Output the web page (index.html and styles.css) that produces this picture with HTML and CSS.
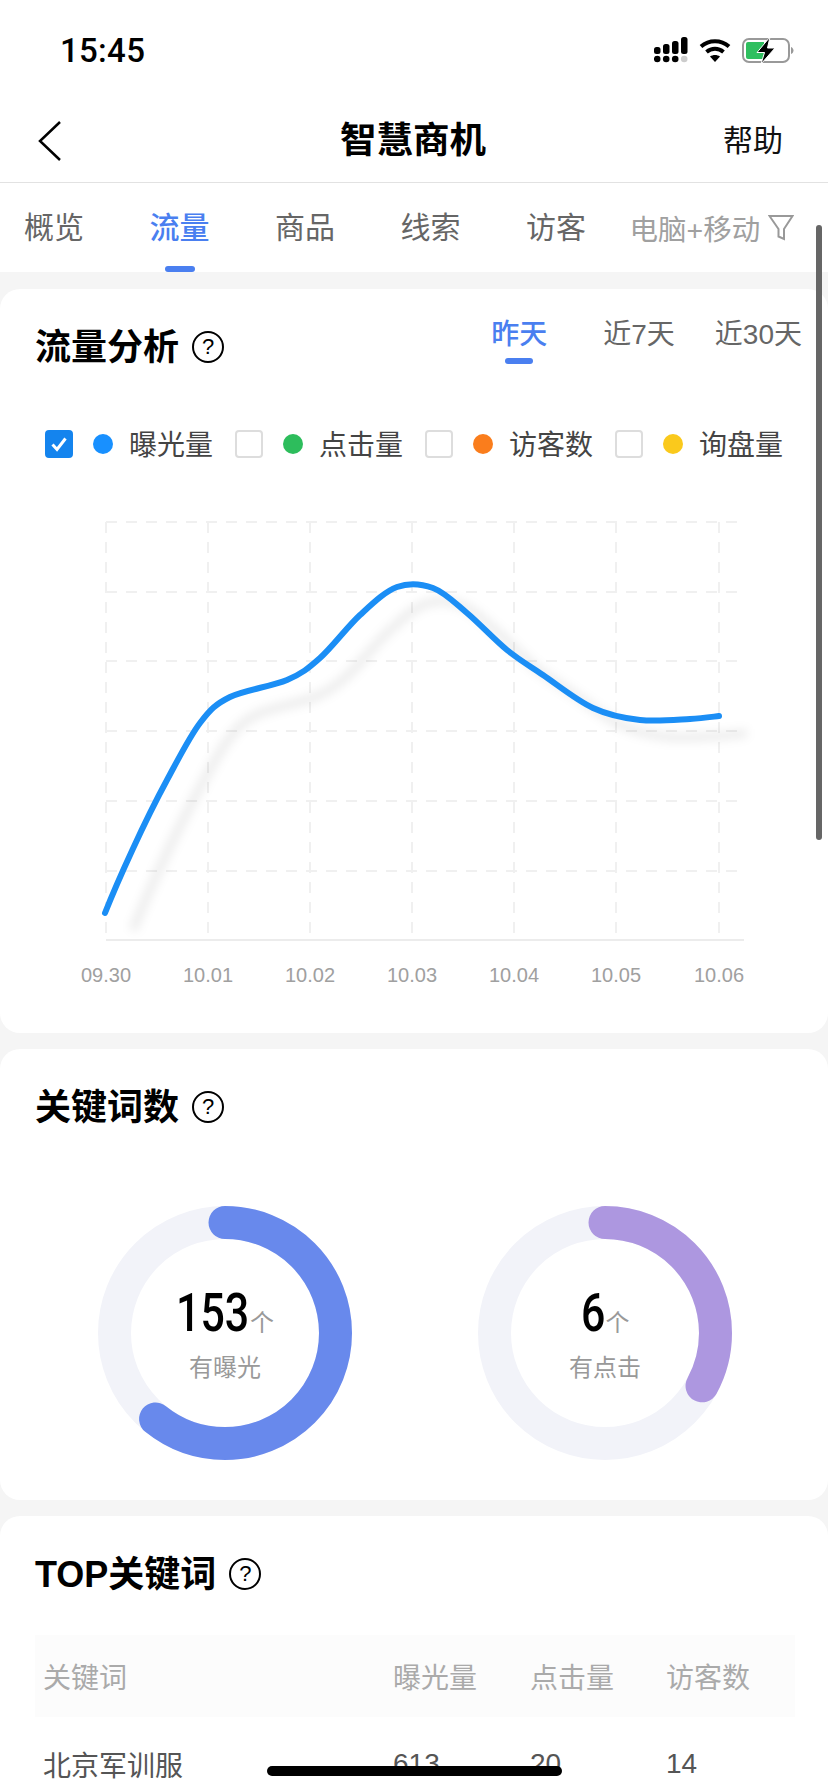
FILE: index.html
```html
<!DOCTYPE html>
<html lang="zh-CN">
<head>
    <meta charset="UTF-8">
    <meta name="viewport" content="width=device-width, initial-scale=1.0">
    <title>智慧商机</title>
    <link rel="stylesheet" href="styles.css">
</head>
<body>
    <div class="status-bar">
        <span class="time">15:45</span>
        <div class="status-icons">
            <svg width="34" height="27" viewBox="0 0 34 27">
                <rect x="0" y="10" width="6.500" height="7" rx="2.500" fill="#000"/>
                <rect x="9" y="7" width="6.500" height="10" rx="2.500" fill="#000"/>
                <rect x="18" y="4" width="6.500" height="13" rx="2.500" fill="#000"/>
                <rect x="27" y="0" width="6.500" height="17" rx="2.500" fill="#000"/>
                <circle cx="3.200" cy="22" r="3.300" fill="#000"/>
                <circle cx="12.200" cy="22" r="3.300" fill="#000"/>
                <circle cx="21.200" cy="22" r="3.300" fill="#000"/>
                <circle cx="30.200" cy="22" r="3.300" fill="#ccc"/>
            </svg>
            <svg width="32" height="25" viewBox="0 0 32 25">
                <path d="M2 8.500C10 1.500 22 1.500 30 8.500" fill="none" stroke="#000" stroke-width="4"/>
                <path d="M7.500 14C12.500 9.800 19.500 9.800 24.500 14" fill="none" stroke="#000" stroke-width="4"/>
                <path d="M11 18.500C14 16.500 18 16.500 21 18.500L16 24Z" fill="#000"/>
            </svg>
            <svg width="52" height="27" viewBox="0 0 52 27">
                <rect x="1" y="2" width="46" height="23" rx="6" fill="#fff" stroke="#999" stroke-width="2"/>
                <path d="M4 7a2 2 0 0 1 2-2H22V22H6a2 2 0 0 1-2-2Z" fill="#2fbf5f"/>
                <path d="M49 10c1.500.500 2.500 2 2.500 3.500s-1 3-2.500 3.500Z" fill="#999"/>
                <path d="M28 0L15 15.500H22.500L19 27L33 11H25.500Z" fill="#000" stroke="#fff" stroke-width="1"/>
            </svg>
        </div>
    </div>

    <div class="nav-bar">
        <svg class="back" width="24" height="40" viewBox="0 0 24 40">
            <path d="M22 1L2 20L22 39" fill="none" stroke="#000" stroke-width="2.500"/>
        </svg>
        <h1 class="nav-title">智慧商机</h1>
        <span class="nav-help">帮助</span>
    </div>

    <div class="tabs">
        <span class="tab">概览</span>
        <span class="tab active">流量</span>
        <span class="tab">商品</span>
        <span class="tab">线索</span>
        <span class="tab">访客</span>
        <span class="device">电脑+移动</span>
        <svg class="filter" width="26" height="28" viewBox="0 0 26 28">
            <path d="M1.500 2H24.500L16 15V25L10.500 22.500V15Z" fill="none" stroke="#999" stroke-width="2"/>
        </svg>
    </div>

    <div class="page">
        <section class="card">
            <div class="card-head">
                <h2 class="card-title">流量分析</h2>
                <span class="help-icon">?</span>
                <div class="range">
                    <span class="range-item active">昨天</span>
                    <span class="range-item">近7天</span>
                    <span class="range-item">近30天</span>
                </div>
            </div>

            <div class="legend">
                <div class="legend-item">
                    <span class="check checked">
                        <svg width="20" height="20" viewBox="0 0 20 20"><path d="M3.500 10.500L8 15.500L16.500 4.500" fill="none" stroke="#fff" stroke-width="3"/></svg>
                    </span>
                    <span class="dot dot-blue"></span>
                    <span class="legend-label">曝光量</span>
                </div>
                <div class="legend-item">
                    <span class="check"></span>
                    <span class="dot dot-green"></span>
                    <span class="legend-label">点击量</span>
                </div>
                <div class="legend-item">
                    <span class="check"></span>
                    <span class="dot dot-orange"></span>
                    <span class="legend-label">访客数</span>
                </div>
                <div class="legend-item">
                    <span class="check"></span>
                    <span class="dot dot-yellow"></span>
                    <span class="legend-label">询盘量</span>
                </div>
            </div>

            <svg class="chart" width="828" height="500" viewBox="0 500 828 500">
                <defs>
                    <path id="curve" d="M105 913C118 880 144.600 821.400 167 780C178.200 759.300 189.500 736.800 200 723C210.500 709.200 215.500 704.200 230 697C244.500 689.800 272 686.500 287 680C302 673.500 307.800 668.800 320 658C332.200 647.200 347.200 626.800 360 615C372.800 603.200 384.800 591.500 397 587C409.200 582.500 421.300 583.700 433 588C444.700 592.300 454.700 602.700 467 613C479.300 623.300 494.300 639.700 507 650C519.700 660.300 528.700 665.300 543 675C557.300 684.700 576.800 700.500 593 708C609.200 715.500 623.800 718.200 640 720C656.200 721.800 676.800 719.700 690 719C703.200 718.300 714.200 716.500 719 716"/>
                </defs>
                <g class="grid">
                    <path d="M106 522H737M106 592H737M106 661H737M106 731H737M106 801H737M106 871H737"/>
                    <path d="M106 522V940M208 522V940M310 522V940M412 522V940M514 522V940M616 522V940M719 522V940"/>
                </g>
                <path class="axis" d="M106 940H744"/>
                <use href="#curve" class="line-shadow"/>
                <use href="#curve" class="line"/>
                <g class="ticks">
                    <text x="106" y="982">09.30</text>
                    <text x="208" y="982">10.01</text>
                    <text x="310" y="982">10.02</text>
                    <text x="412" y="982">10.03</text>
                    <text x="514" y="982">10.04</text>
                    <text x="616" y="982">10.05</text>
                    <text x="719" y="982">10.06</text>
                </g>
            </svg>
        </section>

        <section class="card">
            <div class="card-head">
                <h2 class="card-title">关键词数</h2>
                <span class="help-icon">?</span>
            </div>
            <div class="rings">
                <div class="ring">
                    <svg width="254" height="254" viewBox="0 0 254 254">
                        <circle class="ring-track" cx="127" cy="127" r="110.500"/>
                        <circle class="ring-bar ring-blue" cx="127" cy="127" r="110.500" stroke-dasharray="421.800 694.300" transform="rotate(-90 127 127)"/>
                    </svg>
                    <div class="ring-text">
                        <div class="ring-value"><span class="ring-num ring-num-3">153</span><span class="ring-unit">个</span></div>
                        <div class="ring-label">有曝光</div>
                    </div>
                </div>
                <div class="ring">
                    <svg width="254" height="254" viewBox="0 0 254 254">
                        <circle class="ring-track" cx="127" cy="127" r="110.500"/>
                        <circle class="ring-bar ring-purple" cx="127" cy="127" r="110.500" stroke-dasharray="228.500 694.300" transform="rotate(-90 127 127)"/>
                    </svg>
                    <div class="ring-text">
                        <div class="ring-value"><span class="ring-num ring-num-1">6</span><span class="ring-unit">个</span></div>
                        <div class="ring-label">有点击</div>
                    </div>
                </div>
            </div>
        </section>

        <section class="card">
            <div class="card-head">
                <h2 class="card-title">TOP关键词</h2>
                <span class="help-icon">?</span>
            </div>
            <div class="table-head">
                <span>关键词</span>
                <span>曝光量</span>
                <span>点击量</span>
                <span>访客数</span>
            </div>
            <div class="table-row">
                <span>北京军训服</span>
                <span>613</span>
                <span>20</span>
                <span>14</span>
            </div>
        </section>
    </div>

    <div class="scroll-thumb"></div>
    <div class="home-bar"></div>
</body>
</html>
```

FILE: styles.css
```css
body {
    font-family: "Liberation Sans", "Noto Sans CJK SC", sans-serif;
    background-color: #f5f5f5;
    margin: 0;
    padding: 0;
    width: 828px;
    height: 1792px;
    overflow: hidden;
    position: relative;
}

.status-bar {
    height: 100px;
    padding: 0 34px 0 60px;
    background-color: #fff;
    display: flex;
    align-items: center;
    justify-content: space-between;
}
.time { font-family: Roboto, sans-serif; font-size: 33px; font-weight: 500; color: #000; letter-spacing: 0.3px; }
.status-icons { display: flex; align-items: center; gap: 11px; }

.nav-bar {
    height: 82px;
    padding: 0 40px 0 38px;
    background-color: #fff;
    border-bottom: 1px solid #e2e2e2;
    display: grid;
    grid-template-columns: 1fr auto 1fr;
    align-items: center;
}
.back { display: block; }
.nav-title { margin: 0; font-size: 36.500px; font-weight: 700; line-height: 44px; color: #000; }
.nav-help { justify-self: end; margin-right: 5px; padding-bottom: 6px; font-size: 30px; color: #111; }

.tabs {
    height: 89px;
    padding-left: 24px;
    background-color: #fff;
    display: flex;
    align-items: center;
    gap: 65.500px;
    box-sizing: border-box;
}
.tab { position: relative; font-size: 30px; line-height: 40px; color: #666; }
.tab.active { color: #4a7ff0; font-weight: 500; }
.tab.active::after {
    content: "";
    position: absolute;
    left: 15px;
    bottom: -24px;
    width: 30px;
    height: 6px;
    border-radius: 3px;
    background-color: #4a7ff0;
}
.device { margin-left: -22px; font-size: 28.500px; color: #a0a0a0; white-space: nowrap; }
.filter { margin-left: -58px; display: block; }

.page { padding-top: 17px; }

.card {
    background-color: #fff;
    border-radius: 20px;
    margin-bottom: 16px;
}
.card:nth-child(1) { padding-bottom: 33px; }
.card:nth-child(2) { padding-bottom: 40px; }

.card-head {
    display: flex;
    align-items: flex-start;
    padding: 28px 26px 0 35px;
}
.card-title {
    margin: 13px 0 0;
    font-size: 36px;
    line-height: 35px;
    font-weight: 700;
    color: #000;
}
.help-icon {
    flex: none;
    width: 28px;
    height: 28px;
    margin: 14px 0 0 13px;
    border: 2.500px solid #000;
    border-radius: 50%;
    font-size: 22px;
    line-height: 28px;
    text-align: center;
    color: #000;
}

.range { display: flex; margin-left: auto; }
.range-item { position: relative; font-size: 28px; line-height: 36px; color: #666; white-space: nowrap; }
.range-item + .range-item { margin-left: 56px; }
.range-item:last-child { margin-left: 40px; }
.range-item.active { color: #4a7ff0; font-weight: 500; }
.range-item.active::after {
    content: "";
    position: absolute;
    left: 14px;
    bottom: -11px;
    width: 28px;
    height: 6px;
    border-radius: 3px;
    background-color: #4a7ff0;
}

.legend { display: flex; gap: 22px; margin-top: 65px; padding-left: 45px; }
.legend-item { display: flex; align-items: center; height: 28px; font-size: 28px; line-height: 28px; color: #444; }
.legend-label { padding-top: 4px; }
.check {
    width: 28px;
    height: 28px;
    box-sizing: border-box;
    border: 2px solid #ddd;
    border-radius: 4px;
    display: flex;
    align-items: center;
    justify-content: center;
}
.check.checked { background-color: #1484ee; border-color: #1484ee; }
.dot { width: 20px; height: 20px; border-radius: 50%; margin: 0 16px 0 20px; }
.dot-blue { background-color: #1890ff; }
.dot-green { background-color: #2dbd5c; }
.dot-orange { background-color: #fa7d1c; }
.dot-yellow { background-color: #fac91c; }

.chart { display: block; margin-top: 42px; }
.grid path { fill: none; stroke: #f0f0f0; stroke-width: 2; stroke-dasharray: 11 9; }
.axis { fill: none; stroke: #ececec; stroke-width: 2; }
.line { fill: none; stroke: #1b8ef5; stroke-width: 6; stroke-linecap: round; }
.line-shadow {
    fill: none;
    stroke: #000;
    stroke-opacity: 0.07;
    stroke-width: 9;
    transform: translate(28px, 17px);
    filter: blur(5px);
}
.ticks text { font-size: 20px; fill: #a0a0a0; text-anchor: middle; }

.rings { display: flex; gap: 126px; margin-top: 81px; padding-left: 98px; }
.ring { position: relative; width: 254px; height: 254px; }
.ring svg { display: block; }
.ring-track { fill: none; stroke: #f2f3f9; stroke-width: 33; }
.ring-bar { fill: none; stroke-width: 33; stroke-linecap: round; }
.ring-blue { stroke: #6889ec; }
.ring-purple { stroke: #ad97e0; }
.ring-text { position: absolute; top: 81px; left: 0; right: 0; text-align: center; }
.ring-value { display: flex; justify-content: center; align-items: baseline; height: 53px; }
.ring-num {
    display: inline-block;
    font-family: Roboto, sans-serif;
    font-size: 53px;
    line-height: 53px;
    font-weight: 500;
    color: #000;
    white-space: nowrap;
    transform: scaleX(0.81);
    transform-origin: left;
}
.ring-num-3 { width: 74px; }
.ring-num-1 { width: 25px; }
.ring-unit { font-size: 24px; line-height: 24px; color: #999; }
.ring-label { margin-top: 13px; font-size: 24px; line-height: 30px; color: #999; }

.table-head, .table-row {
    display: grid;
    grid-template-columns: 350px 137px 136px 1fr;
    padding-left: 8px;
    font-size: 28px;
    align-items: center;
}
.table-head {
    height: 82px;
    margin: 43px 33px 0 35px;
    background-color: #fcfcfc;
    color: #aaa;
}
.table-row {
    height: 94px;
    margin: 0 33px 0 35px;
    color: #555;
}

.scroll-thumb {
    position: absolute;
    left: 816px;
    top: 225px;
    width: 6px;
    height: 615px;
    border-radius: 3px;
    background-color: #666;
}
.home-bar {
    position: absolute;
    left: 267px;
    top: 1766px;
    width: 295px;
    height: 10px;
    border-radius: 5px;
    background-color: #000;
}
```
